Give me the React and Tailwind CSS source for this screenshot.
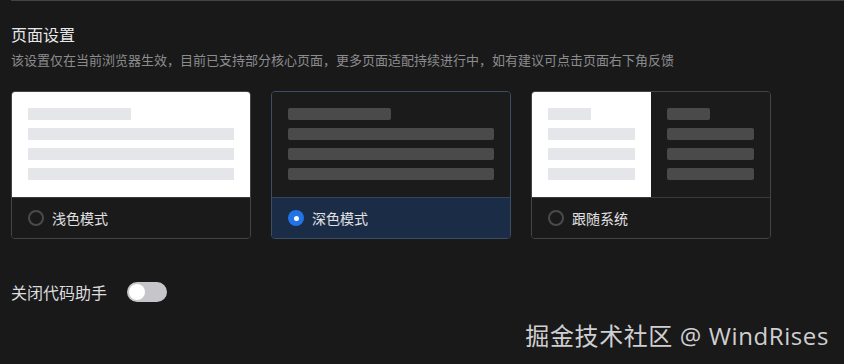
import React, { useState } from "react";

const FONT = { fontFamily: '"Noto Sans CJK SC", "Noto Sans", sans-serif' };

const Radio = ({ checked }) =>
    checked ? (
        <span className="w-4 h-4 rounded-full bg-[#2173e6] flex items-center justify-center">
            <span className="w-[5px] h-[5px] rounded-full bg-white" />
        </span>
    ) : (
        <span className="w-4 h-4 rounded-full border-2 border-[#4a4a4c] box-border" />
    );

const Lines = ({ light, first }) => {
    const c = light ? "bg-[#e5e6ea]" : "bg-[#4a4a4a] rounded-[2px]";
    return (
        <div className="flex flex-col gap-2">
            <div className={`h-3 ${c}`} style={{ width: first }} />
            <div className={`h-3 w-full ${c}`} />
            <div className={`h-3 w-full ${c}`} />
            <div className={`h-3 w-full ${c}`} />
        </div>
    );
};

const ThemeCard = ({ label, selected, kind, onClick }) => (
    <div
        onClick={onClick}
        className={`w-[240px] h-[148px] rounded-[4px] border overflow-hidden flex flex-col cursor-pointer ${
            selected ? "border-[#3d4d63]" : "border-[#444446]"
        }`}
    >
        {kind === "system" ? (
            <div className="h-[105px] flex">
                <div className="flex-1 bg-white p-4">
                    <Lines light first={43} />
                </div>
                <div className="flex-1 bg-[#1b1b1c] p-4">
                    <Lines first={43} />
                </div>
            </div>
        ) : (
            <div
                className={`h-[105px] p-4 ${
                    kind === "light" ? "bg-white" : "bg-[#1b1b1c]"
                }`}
            >
                <Lines light={kind === "light"} first={103} />
            </div>
        )}
        <div
            className={`flex-1 flex items-center gap-2 pl-4 border-t ${
                selected
                    ? "bg-[#1b2c47] border-[#34465f]"
                    : "bg-[#1a1a1b] border-[#3a3a3c]"
            }`}
        >
            <Radio checked={selected} />
            <span className="text-[14px] text-[#e2e2e4] leading-5">{label}</span>
        </div>
    </div>
);

const App = () => {
    const [theme, setTheme] = useState("dark");
    const [helperOff, setHelperOff] = useState(false);

    return (
        <div
            className="w-[844px] h-[364px] bg-[#19191a] relative overflow-hidden"
            style={FONT}
        >
            <div className="ml-[11px] h-px bg-[#434345]" />
            <div className="pl-[11px]">
                <h1 className="mt-[21px] text-[16px] leading-6 text-[#e8e8ea]">
                    页面设置
                </h1>
                <p className="mt-1 text-[13px] leading-5 text-[#8c8c8e]">
                    该设置仅在当前浏览器生效，目前已支持部分核心页面，更多页面适配持续进行中，如有建议可点击页面右下角反馈
                </p>

                <div className="mt-[21px] flex gap-5">
                    <ThemeCard
                        label="浅色模式"
                        kind="light"
                        selected={theme === "light"}
                        onClick={() => setTheme("light")}
                    />
                    <ThemeCard
                        label="深色模式"
                        kind="dark"
                        selected={theme === "dark"}
                        onClick={() => setTheme("dark")}
                    />
                    <ThemeCard
                        label="跟随系统"
                        kind="system"
                        selected={theme === "system"}
                        onClick={() => setTheme("system")}
                    />
                </div>

                <div className="mt-[43px] flex items-center gap-5">
                    <span className="text-[16px] leading-5 text-[#dcdcde]">
                        关闭代码助手
                    </span>
                    <button
                        onClick={() => setHelperOff(!helperOff)}
                        className={`w-10 h-5 rounded-full p-[2px] flex ${
                            helperOff
                                ? "bg-[#2173e6] justify-end"
                                : "bg-[#c6c6ca] justify-start"
                        }`}
                    >
                        <span className="w-4 h-4 rounded-full bg-white" />
                    </button>
                </div>
            </div>

            <div
                className="absolute right-[15px] top-[320px] text-[24px] leading-8 text-[#cfcfd1] tracking-[0.6px]"
                style={{ fontFamily: '"Open Sans", "Noto Sans CJK SC", sans-serif' }}
            >
                掘金技术社区 @ WindRises
            </div>
        </div>
    );
};

export default App;
